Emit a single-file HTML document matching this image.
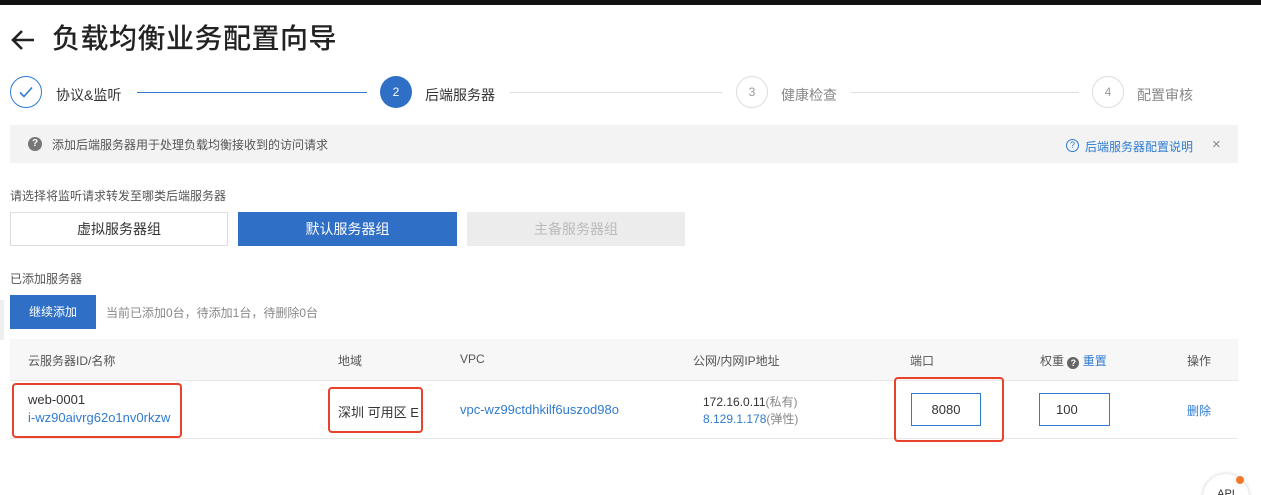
<!DOCTYPE html>
<html><head><meta charset="utf-8"><style>
*{margin:0;padding:0;box-sizing:border-box}
html,body{width:1261px;height:495px;overflow:hidden}
body{background:#fff;font-family:"Liberation Sans","Noto Sans CJK SC",sans-serif;color:#333;position:relative;font-size:12px}
.a{position:absolute;white-space:nowrap}
.blue{color:#2f7bd1}
.red{position:absolute;border:2px solid #e8412c;border-radius:4px}
.circ{position:absolute;width:32px;height:32px;border-radius:50%;text-align:center;line-height:30px;font-size:12px}
.line{position:absolute;height:1px}
</style></head><body>
<div class="a" style="left:0;top:0;width:1261px;height:5px;background:#111"></div>
<svg class="a" style="left:10px;top:29px" width="26" height="22" viewBox="0 0 26 22"><path d="M24 11H3M12 2L3 11l9 9" fill="none" stroke="#222" stroke-width="2.6"/></svg>
<div class="a" style="left:52px;top:20px;font-size:28px;color:#222;line-height:38px;font-weight:500;letter-spacing:0.5px">负载均衡业务配置向导</div>

<div class="circ" style="left:10px;top:76px;border:1px solid #2f7bd1;color:#2f7bd1"><svg width="16" height="16" viewBox="0 0 16 16" style="margin-top:7px"><path d="M2 8.5l4 4 8-9" fill="none" stroke="#2f7bd1" stroke-width="1.6"/></svg></div>
<div class="a" style="left:56px;top:85px;font-size:14px;color:#333">协议&amp;监听</div>
<div class="line" style="left:137px;top:92px;width:230px;background:#2f7bd1"></div>
<div class="circ" style="left:380px;top:76px;background:#2f6fc5;color:#fff;line-height:32px">2</div>
<div class="a" style="left:425px;top:85px;font-size:14px;color:#333">后端服务器</div>
<div class="line" style="left:510px;top:92px;width:212px;background:#ddd"></div>
<div class="circ" style="left:736px;top:76px;border:1px solid #ddd;color:#999">3</div>
<div class="a" style="left:781px;top:85px;font-size:14px;color:#888">健康检查</div>
<div class="line" style="left:851px;top:92px;width:228px;background:#ddd"></div>
<div class="circ" style="left:1092px;top:76px;border:1px solid #ddd;color:#999">4</div>
<div class="a" style="left:1137px;top:85px;font-size:14px;color:#888">配置审核</div>

<div class="a" style="left:10px;top:125px;width:1228px;height:38px;background:#f3f3f3"></div>
<div class="a" style="left:28px;top:137px;width:14px;height:14px;border-radius:50%;background:#777;color:#fff;font-size:10px;text-align:center;line-height:14px;font-weight:bold">?</div>
<div class="a" style="left:52px;top:136px;color:#555">添加后端服务器用于处理负载均衡接收到的访问请求</div>
<div class="a blue" style="left:1066px;top:139px;width:13px;height:13px;border:1px solid #2f7bd1;border-radius:50%;font-size:9px;text-align:center;line-height:11px">?</div>
<div class="a blue" style="left:1085px;top:138px">后端服务器配置说明</div>
<div class="a" style="left:1212px;top:136px;color:#888;font-size:15px">×</div>

<div class="a" style="left:10px;top:187px;color:#555">请选择将监听请求转发至哪类后端服务器</div>
<div class="a" style="left:10px;top:212px;width:218px;height:34px;border:1px solid #ddd;text-align:center;line-height:32px;font-size:14px;color:#333">虚拟服务器组</div>
<div class="a" style="left:238px;top:212px;width:219px;height:34px;background:#2f6fc5;text-align:center;line-height:34px;font-size:14px;color:#fff">默认服务器组</div>
<div class="a" style="left:467px;top:212px;width:218px;height:34px;background:#ececec;text-align:center;line-height:34px;font-size:14px;color:#bbb">主备服务器组</div>

<div class="a" style="left:10px;top:270px;color:#555">已添加服务器</div>
<div class="a" style="left:10px;top:295px;width:86px;height:34px;background:#2f6fc5;color:#fff;text-align:center;line-height:34px">继续添加</div>
<div class="a" style="left:106px;top:304px;color:#888">当前已添加0台，待添加1台，待删除0台</div>
<div class="a" style="left:0;top:300px;width:4px;height:40px;background:#eee"></div>

<div class="a" style="left:10px;top:339px;width:1228px;height:42px;background:#f7f7f7;border-bottom:1px solid #e8e8e8"></div>
<div class="a" style="left:28px;top:352px;color:#555">云服务器ID/名称</div>
<div class="a" style="left:338px;top:352px;color:#555">地域</div>
<div class="a" style="left:460px;top:352px;color:#555">VPC</div>
<div class="a" style="left:693px;top:352px;color:#555">公网/内网IP地址</div>
<div class="a" style="left:910px;top:352px;color:#555">端口</div>
<div class="a" style="left:1040px;top:352px;color:#555">权重 <span style="display:inline-block;width:12px;height:12px;border-radius:50%;background:#666;color:#fff;font-size:9px;text-align:center;line-height:12px;font-weight:bold;vertical-align:-1px">?</span> <span class="blue">重置</span></div>
<div class="a" style="left:1187px;top:352px;color:#555">操作</div>
<div class="a" style="left:10px;top:438px;width:1228px;height:1px;background:#e8e8e8"></div>

<div class="a" style="left:28px;top:392px;font-size:13px;color:#333">web-0001</div>
<div class="a blue" style="left:28px;top:410px;font-size:13px">i-wz90aivrg62o1nv0rkzw</div>
<div class="red" style="left:12px;top:383px;width:170px;height:55px"></div>
<div class="a" style="left:338px;top:402px;font-size:13px;color:#333">深圳 可用区 E</div>
<div class="red" style="left:328px;top:387px;width:95px;height:46px"></div>
<div class="a blue" style="left:460px;top:402px;font-size:13px">vpc-wz99ctdhkilf6uszod98o</div>
<div class="a" style="left:703px;top:393px;color:#333">172.16.0.11<span style="color:#888">(私有)</span></div>
<div class="a" style="left:703px;top:410px"><span class="blue">8.129.1.178</span><span style="color:#888">(弹性)</span></div>
<div class="a" style="left:911px;top:393px;width:70px;height:33px;border:1px solid #2f7bd1;text-align:center;line-height:31px;font-size:13px">8080</div>
<div class="red" style="left:894px;top:377px;width:110px;height:65px"></div>
<div class="a" style="left:1039px;top:393px;width:71px;height:33px;border:1px solid #2f7bd1;padding-left:16px;line-height:31px;font-size:13px">100</div>
<div class="a blue" style="left:1187px;top:402px">删除</div>

<div class="a" style="left:1198px;top:470px;width:60px;height:25px;overflow:hidden">
<div style="position:absolute;left:5px;top:4px;width:46px;height:46px;border-radius:50%;background:#fff;box-shadow:0 0 4px rgba(0,0,0,.2);text-align:center;font-size:11px;padding-top:14px;color:#333">API</div>
<div style="position:absolute;left:38px;top:6px;width:8px;height:8px;border-radius:50%;background:#f07a2a"></div>
</div>
</body></html>
